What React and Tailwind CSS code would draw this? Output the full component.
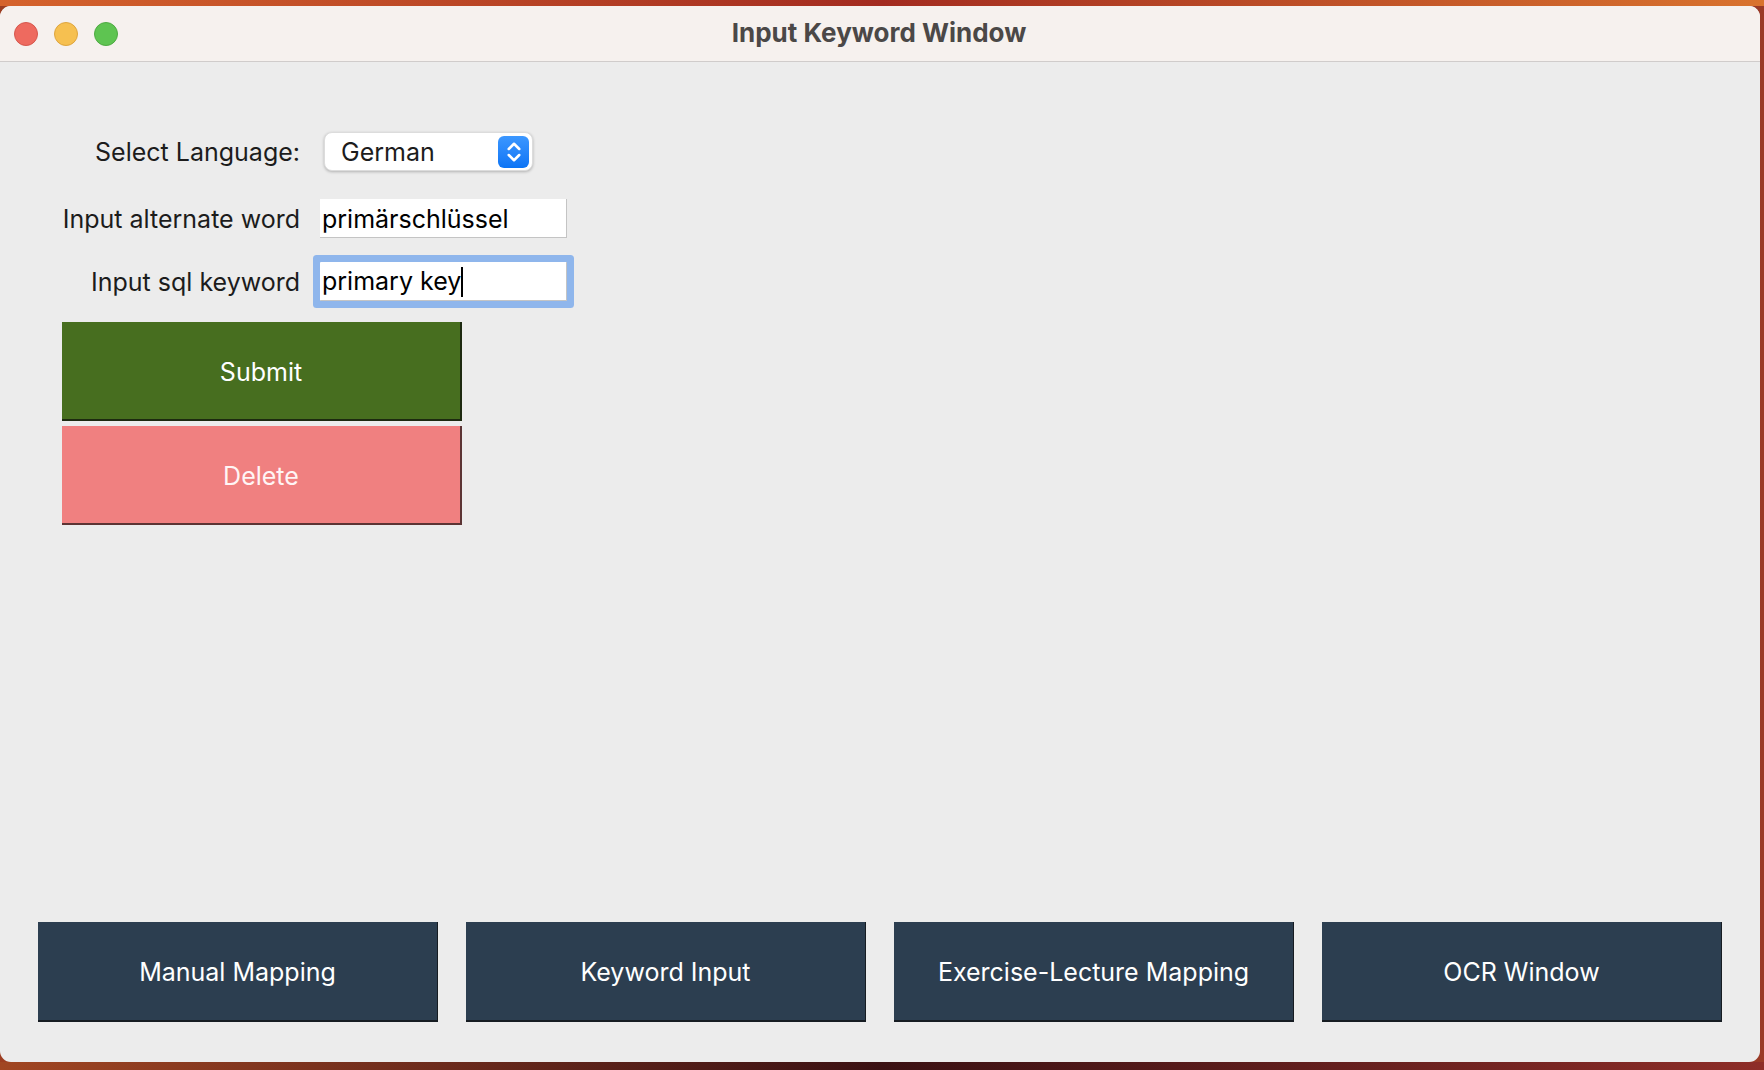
function Chevrons() {
  return (
    <svg viewBox="0 0 16 16" className="w-[24px] h-[26px]" fill="none" stroke="white" strokeWidth="1.7" strokeLinecap="round" strokeLinejoin="round">
      <path d="M4.5 6 8 2.5 11.5 6" />
      <path d="M4.5 10 8 13.5 11.5 10" />
    </svg>
  );
}

const navItems = ["Manual Mapping", "Keyword Input", "Exercise-Lecture Mapping", "OCR Window"];

export default function App() {
  return (
    <div
      className="w-[1764px] h-[1070px] flex flex-col overflow-hidden bg-gradient-to-r from-[#9c3d20] via-[#4a1416] to-[#9a3a26]"
      style={{ fontFamily: "Inter, 'Liberation Sans', sans-serif" }}
    >
      {/* wallpaper strip above the window */}
      <div className="h-[6px] shrink-0 bg-gradient-to-r from-[#d5632c] via-[#a32b20] to-[#d9732e]" />

      <div className="flex h-[1056px] shrink-0">
        <div className="w-[1760px] h-full flex flex-col rounded-[11px] overflow-hidden bg-[#ececec]">
          {/* Title bar */}
          <div className="relative h-[56px] shrink-0 flex items-center justify-center bg-[#f6f1ee] border-b border-[#d0cccb]">
            <div className="absolute left-[14px] top-[16px] flex gap-[16px]">
              <span className="w-[24px] h-[24px] rounded-full bg-[#ee6a5f] border border-[#d6574d]" />
              <span className="w-[24px] h-[24px] rounded-full bg-[#f6c050] border border-[#dea53e]" />
              <span className="w-[24px] h-[24px] rounded-full bg-[#5ec451] border border-[#4eaa42]" />
            </div>
            <span className="text-[26px] font-bold text-[#4b4847] ml-[-2px] mt-[-2px]">Input Keyword Window</span>
          </div>

          {/* Content */}
          <div className="flex-1 flex flex-col">
            <div className="pl-[62px] pt-[70px] flex flex-col text-[25px] text-[#1c1c1c]">
              <div className="flex items-center h-[39px]">
                <div className="w-[238px] text-right pt-[2px]">Select Language:</div>
                <div className="ml-[24px] w-[209px] h-[39px] rounded-[8px] bg-white shadow-[0_1px_3px_rgba(0,0,0,0.25)] border border-[#dcdcdc] flex items-center pl-[16px] pr-[3px]">
                  <span className="flex-1 pt-[2px]">German</span>
                  <div className="w-[31px] h-[32px] rounded-[6px] bg-gradient-to-b from-[#3b97ff] to-[#0a74f5] flex items-center justify-center">
                    <Chevrons />
                  </div>
                </div>
              </div>

              <div className="flex items-center h-[39px] mt-[28px]">
                <div className="w-[238px] text-right pt-[3px]">Input alternate word</div>
                <div className="ml-[20px] w-[247px] h-[39px] bg-white border-b border-r border-[#c4c4c4] flex items-center pl-[2px] pt-[3px] text-black">
                  primärschlüssel
                </div>
              </div>

              <div className="flex items-center h-[39px] mt-[24px]">
                <div className="w-[238px] text-right pt-[2px]">Input sql keyword</div>
                <div className="ml-[20px] w-[247px] h-[39px] bg-white border-b border-r border-[#c4c4c4] flex items-center pl-[2px] pt-[2px] text-black rounded-[1px] ring-[7px] ring-[#8fb6ec]">
                  <span>primary key</span>
                  <span className="w-[2px] h-[30px] bg-black" />
                </div>
              </div>

              <button className="mt-[21px] w-[400px] h-[99px] pt-[4px] bg-[#476e1f] border-b-2 border-r-2 border-[#1d2a10] text-white text-[25px]">
                Submit
              </button>
              <button className="mt-[5px] w-[400px] h-[99px] pt-[4px] bg-[#f08080] border-b-2 border-r-2 border-[#5c3434] text-[#fff5f5] text-[25px]">
                Delete
              </button>
            </div>

            {/* Bottom navigation */}
            <div className="mt-auto px-[38px] pb-[40px] grid grid-cols-4 gap-[28px]">
              {navItems.map((item) => (
                <button
                  key={item}
                  className="h-[100px] pt-[4px] bg-[#2c3e50] border-b-2 border-r border-[#161c22] text-white text-[25px]"
                >
                  {item}
                </button>
              ))}
            </div>
          </div>
        </div>
      </div>

      {/* wallpaper strip below the window */}
      <div className="h-[8px] shrink-0 bg-gradient-to-r from-[#a14622] via-[#3b1113] to-[#8e2d28]" />
    </div>
  );
}
